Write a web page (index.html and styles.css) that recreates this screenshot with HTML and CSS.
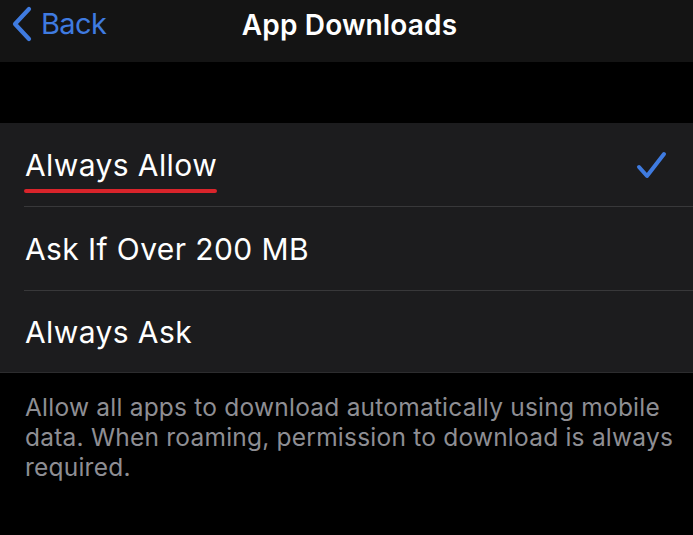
FILE: index.html
```html
<!DOCTYPE html>
<html lang="en">
<head>
<meta charset="utf-8">
<title>App Downloads</title>
<link rel="stylesheet" href="styles.css">
</head>
<body>
<div class="screen">
  <header class="nav">
    <a class="back" href="#">
      <svg class="chev" width="22" height="36" viewBox="0 0 22 36"><path d="M18 3 L4 18 L18 33" fill="none" stroke="#3f7be0" stroke-width="4.2" stroke-linecap="round" stroke-linejoin="round"/></svg>
      <span class="back-label">Back</span>
    </a>
    <h1 class="title">App Downloads</h1>
  </header>
  <div class="spacer"></div>
  <ul class="list">
    <li class="row">
      <span class="label underlined">Always Allow</span>
      <svg class="check" width="32" height="30" viewBox="0 0 32 30"><path d="M4 17 L12 26 L29 4" fill="none" stroke="#3f7be0" stroke-width="4" stroke-linecap="round" stroke-linejoin="round"/></svg>
    </li>
    <li class="row"><span class="label">Ask If Over 200 MB</span></li>
    <li class="row"><span class="label">Always Ask</span></li>
  </ul>
  <p class="footer">Allow all apps to download automatically using mobile data. When roaming, permission to download is always required.</p>
</div>
</body>
</html>
```
FILE: styles.css
```css
* { box-sizing: border-box; }
html, body { margin: 0; padding: 0; background: #000; }
body { font-family: Inter, "Noto Sans", sans-serif; color: #fff; }
.screen { width: 693px; height: 535px; overflow: hidden; background: #000; }
.nav {
  height: 62px;
  background: #141414;
  position: relative;
  display: flex;
  align-items: center;
  justify-content: center;
  padding-left: 6px;
}
.back {
  position: absolute;
  left: 11px;
  top: 6px;
  display: flex;
  align-items: center;
  gap: 8px;
  text-decoration: none;
  color: #3f7be0;
}
.back-label { font-size: 29px; line-height: 36px; letter-spacing: -0.6px; }
.title {
  margin: 0;
  margin-top: -12px;
  font-size: 28px;
  font-weight: 600;
  letter-spacing: 0.15px;
}
.spacer { height: 61px; }
.list {
  list-style: none;
  margin: 0;
  padding: 0 0 0 24px;
  background: #1c1c1e;
  border-bottom: 1px solid #2c2c2e;
}
.row {
  height: 84px;
  display: flex;
  align-items: center;
  justify-content: space-between;
  padding-right: 26px;
  border-bottom: 1px solid #38383a;
}
.row:last-child { border-bottom: none; height: 81px; }
.label {
  font-size: 30px;
  letter-spacing: 0.4px;
  padding-left: 1px;
  position: relative;
}
.underlined::after {
  content: "";
  position: absolute;
  left: 0;
  right: 0;
  bottom: -10px;
  height: 4px;
  border-radius: 2px;
  background: #d9242b;
}
.footer {
  margin: 0;
  padding: 19px 10px 0 25px;
  font-size: 24.5px;
  line-height: 30px;
  color: #8e8e93;
  letter-spacing: 0.22px;
}
```
